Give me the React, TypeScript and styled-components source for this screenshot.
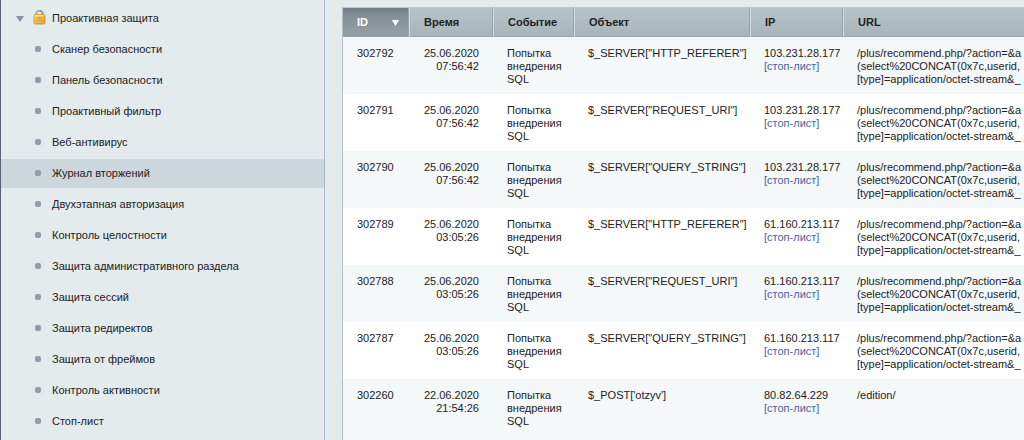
import React from 'react';
import styled, { createGlobalStyle } from 'styled-components';

const Global = createGlobalStyle`
  * { box-sizing: border-box; }
  html, body { margin: 0; background: #e3ebed; }
  body { font: 11px/13px "Liberation Sans", Arial, sans-serif; color: #222; }
`;

const Page = styled.div`
  display: flex;
  height: 100vh;
  overflow: hidden;
`;

const Sidebar = styled.nav`
  flex: 0 0 325px;
  border-left: 1px solid #5b6075;
  border-right: 1px solid #a5bbcd;
  padding-top: 4px;
`;

const Section = styled.button`
  display: flex;
  align-items: center;
  width: 100%;
  height: 28px;
  padding: 0 0 0 15px;
  border: 0;
  background: none;
  font: inherit;
  color: inherit;
  text-align: left;
`;

const Arrow = styled.svg`
  width: 8px;
  height: 6px;
  margin: 2px 9px 0 0;
`;

const Lock = styled.svg`
  width: 13px;
  height: 16px;
  margin-right: 6px;
`;

const Menu = styled.ul`
  display: flex;
  flex-direction: column;
  gap: 2px;
  margin: 3px 0 0;
  padding: 0;
  list-style: none;
`;

const MenuLink = styled.a<{ $active?: boolean }>`
  display: flex;
  align-items: center;
  gap: 11px;
  height: 29px;
  padding-left: 34px;
  background: ${(p) => (p.$active ? '#ccd7dc' : 'transparent')};
  color: inherit;
  text-decoration: none;

  &::before {
    content: '';
    width: 6px;
    height: 6px;
    margin-bottom: 1px;
    border-radius: 2px;
    background: #949cab;
  }
`;

const Content = styled.main`
  flex: 1;
  min-width: 0;
  overflow: hidden;
  padding: 7px 0 0 17px;
`;

const Log = styled.table`
  width: 100%;
  table-layout: fixed;
  border-collapse: separate;
  border-spacing: 0;
  border-left: 1px solid #b4c0c8;
`;

const Col = styled.col<{ $w?: number }>`
  width: ${(p) => (p.$w ? `${p.$w}px` : 'auto')};
`;

const Th = styled.th<{ $sorted?: boolean }>`
  height: 30px;
  padding: 0 14px;
  border-top: 1px solid #b9c8d4;
  border-bottom: 1px solid #98a7ab;
  border-left: ${(p) => (p.$sorted ? '0' : '1px solid #d3dde0')};
  border-right: 1px solid #98a5ab;
  background: ${(p) =>
    p.$sorted
      ? 'linear-gradient(#737f86, #87949a 40%, #939fa4)'
      : 'linear-gradient(#b7c5ca, #a7b5b8)'};
  color: ${(p) => (p.$sorted ? '#fff' : '#222')};
  text-align: left;
  white-space: nowrap;

  &:last-child { border-right: 0; }
`;

const SortButton = styled.button`
  display: flex;
  align-items: center;
  justify-content: space-between;
  width: 100%;
  padding: 0;
  border: 0;
  background: none;
  font: inherit;
  color: inherit;
`;

const SortMark = styled.svg`
  width: 7px;
  height: 6px;
  margin: 2px -5px 0 0;
`;

const Row = styled.tr`
  background: #fff;
  &:nth-child(odd) { background: #f4f8f9; }
  &:last-child td { padding-bottom: 24px; }
`;

const Td = styled.td<{ $right?: boolean }>`
  height: 57px;
  padding: 10px 14px 8px;
  vertical-align: top;
  text-align: ${(p) => (p.$right ? 'right' : 'left')};
  white-space: pre;
`;

const StopLink = styled.a`
  color: #4a639f;
  text-decoration: none;
`;

const menu = [
  'Сканер безопасности', 'Панель безопасности', 'Проактивный фильтр', 'Веб-антивирус',
  'Журнал вторжений', 'Двухэтапная авторизация', 'Контроль целостности',
  'Защита административного раздела', 'Защита сессий', 'Защита редиректов',
  'Защита от фреймов', 'Контроль активности', 'Стоп-лист',
];

const attackUrl =
  '/plus/recommend.php/?action=&a\n(select%20CONCAT(0x7c,userid,\n[type]=application/octet-stream&_';

const rows = [
  ['302792', '25.06.2020\n07:56:42', '$_SERVER["HTTP_REFERER"]', '103.231.28.177', attackUrl],
  ['302791', '25.06.2020\n07:56:42', '$_SERVER["REQUEST_URI"]', '103.231.28.177', attackUrl],
  ['302790', '25.06.2020\n07:56:42', '$_SERVER["QUERY_STRING"]', '103.231.28.177', attackUrl],
  ['302789', '25.06.2020\n03:05:26', '$_SERVER["HTTP_REFERER"]', '61.160.213.117', attackUrl],
  ['302788', '25.06.2020\n03:05:26', '$_SERVER["REQUEST_URI"]', '61.160.213.117', attackUrl],
  ['302787', '25.06.2020\n03:05:26', '$_SERVER["QUERY_STRING"]', '61.160.213.117', attackUrl],
  ['302260', '22.06.2020\n21:54:26', "$_POST['otzyv']", '80.82.64.229', '/edition/'],
];

export default function App() {
  return (
    <Page>
      <Global />
      <Sidebar>
        <Section type="button" aria-expanded="true">
          <Arrow viewBox="0 0 8 6" aria-hidden="true">
            <path d="M0 0h8L4 6z" fill="#8791a3" />
          </Arrow>
          <Lock viewBox="0 0 13 16" aria-hidden="true">
            <defs>
              <linearGradient id="gold" x1="0" y1="0" x2="1" y2="1">
                <stop offset="0" stopColor="#fbdc7a" />
                <stop offset="1" stopColor="#e6a01f" />
              </linearGradient>
            </defs>
            <path d="M3.2 7V3.9a3.3 3.1 0 0 1 6.6 0V7" fill="none" stroke="#929698" strokeWidth="1.8" />
            <path d="M3.2 6V3.9a3.3 3.1 0 0 1 3.3-3.1" fill="none" stroke="#c9cdce" strokeWidth="0.8" />
            <rect x="1" y="4.5" width="11" height="9.5" rx="1.5" fill="url(#gold)" stroke="#c58b27" strokeWidth="0.8" />
            <path d="M3 8h7M3 10.5h7" stroke="#d6932a" strokeWidth="0.8" />
            <path d="M2 5.6h9" stroke="#fff0b4" strokeWidth="0.9" />
          </Lock>
          Проактивная защита
        </Section>
        <Menu>
          {menu.map((label) => (
            <li key={label}>
              <MenuLink href="#" $active={label === 'Журнал вторжений'}>{label}</MenuLink>
            </li>
          ))}
        </Menu>
      </Sidebar>
      <Content>
        <Log>
          <colgroup>
            <Col $w={66} /><Col $w={84} /><Col $w={81} /><Col $w={176} /><Col $w={93} /><Col />
          </colgroup>
          <thead>
            <tr>
              <Th $sorted aria-sort="descending">
                <SortButton type="button">
                  ID
                  <SortMark viewBox="0 0 7 6" aria-hidden="true">
                    <path d="M0 0h7L3.5 6z" fill="#fff" />
                  </SortMark>
                </SortButton>
              </Th>
              <Th>Время</Th>
              <Th>Событие</Th>
              <Th>Объект</Th>
              <Th>IP</Th>
              <Th>URL</Th>
            </tr>
          </thead>
          <tbody>
            {rows.map(([id, time, object, ip, url]) => (
              <Row key={id}>
                <Td>{id}</Td>
                <Td $right>{time}</Td>
                <Td>{'Попытка\nвнедрения\nSQL'}</Td>
                <Td>{object}</Td>
                <Td>{ip}<br /><StopLink href="#">[стоп-лист]</StopLink></Td>
                <Td>{url}</Td>
              </Row>
            ))}
          </tbody>
        </Log>
      </Content>
    </Page>
  );
}
